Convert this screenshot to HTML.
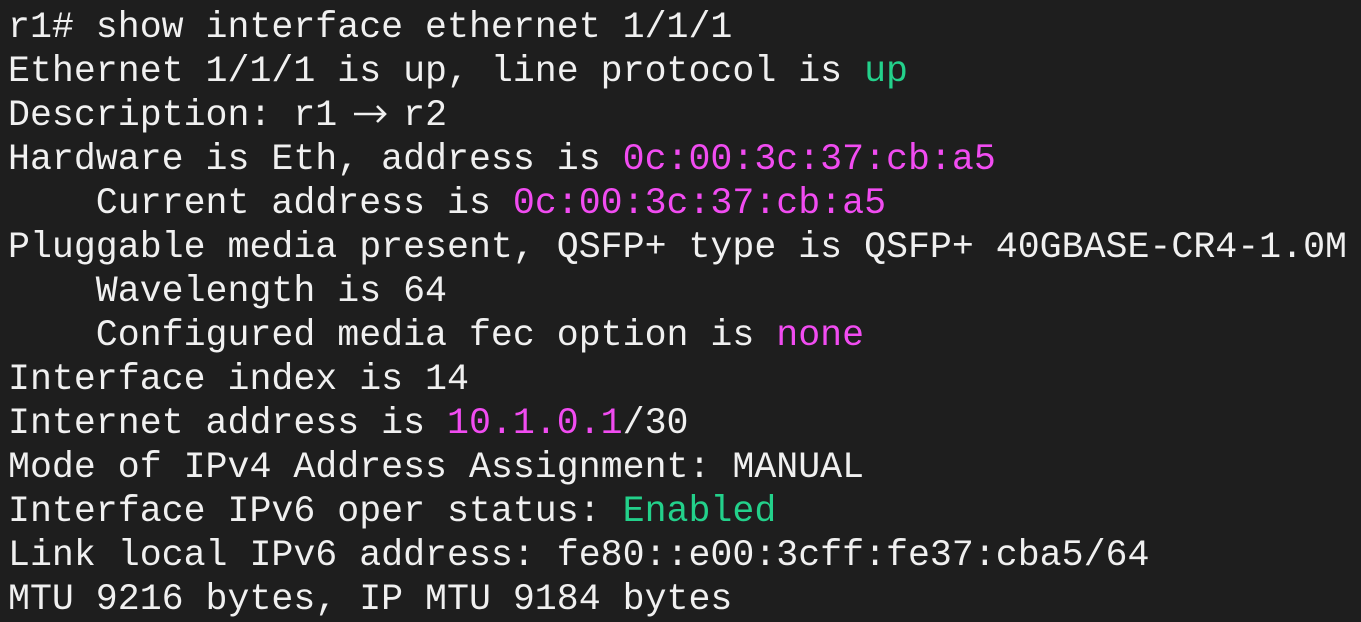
<!DOCTYPE html>
<html><head><meta charset="utf-8"><style>
html,body{margin:0;padding:0;background:#1e1e1e;width:1361px;height:622px;overflow:hidden}
pre{margin:0;padding:6px 0 0 8px;font-family:"Liberation Mono","DejaVu Sans Mono",monospace;font-size:36.6px;line-height:44px;color:#f0f0f0;white-space:pre}
.g{color:#23d18b}.m{color:#f14cf1}
.a{display:inline-block;width:22px;height:0;position:relative}
.a svg{position:absolute;left:-6px;top:-36px;overflow:visible}
</style></head><body><pre>r1# show interface ethernet 1/1/1
Ethernet 1/1/1 is up, line protocol is <span class="g">up</span>
Description: r1 <span class="a"><svg width="34" height="44" viewBox="0 0 34 44"><path d="M1 25H32M24 17L32 25L24 33" stroke="#f0f0f0" stroke-width="2.6" fill="none"/></svg></span> r2
Hardware is Eth, address is <span class="m">0c:00:3c:37:cb:a5</span>
    Current address is <span class="m">0c:00:3c:37:cb:a5</span>
Pluggable media present, QSFP+ type is QSFP+ 40GBASE-CR4-1.0M
    Wavelength is 64
    Configured media fec option is <span class="m">none</span>
Interface index is 14
Internet address is <span class="m">10.1.0.1</span>/30
Mode of IPv4 Address Assignment: MANUAL
Interface IPv6 oper status: <span class="g">Enabled</span>
Link local IPv6 address: fe80::e00:3cff:fe37:cba5/64
MTU 9216 bytes, IP MTU 9184 bytes</pre></body></html>
